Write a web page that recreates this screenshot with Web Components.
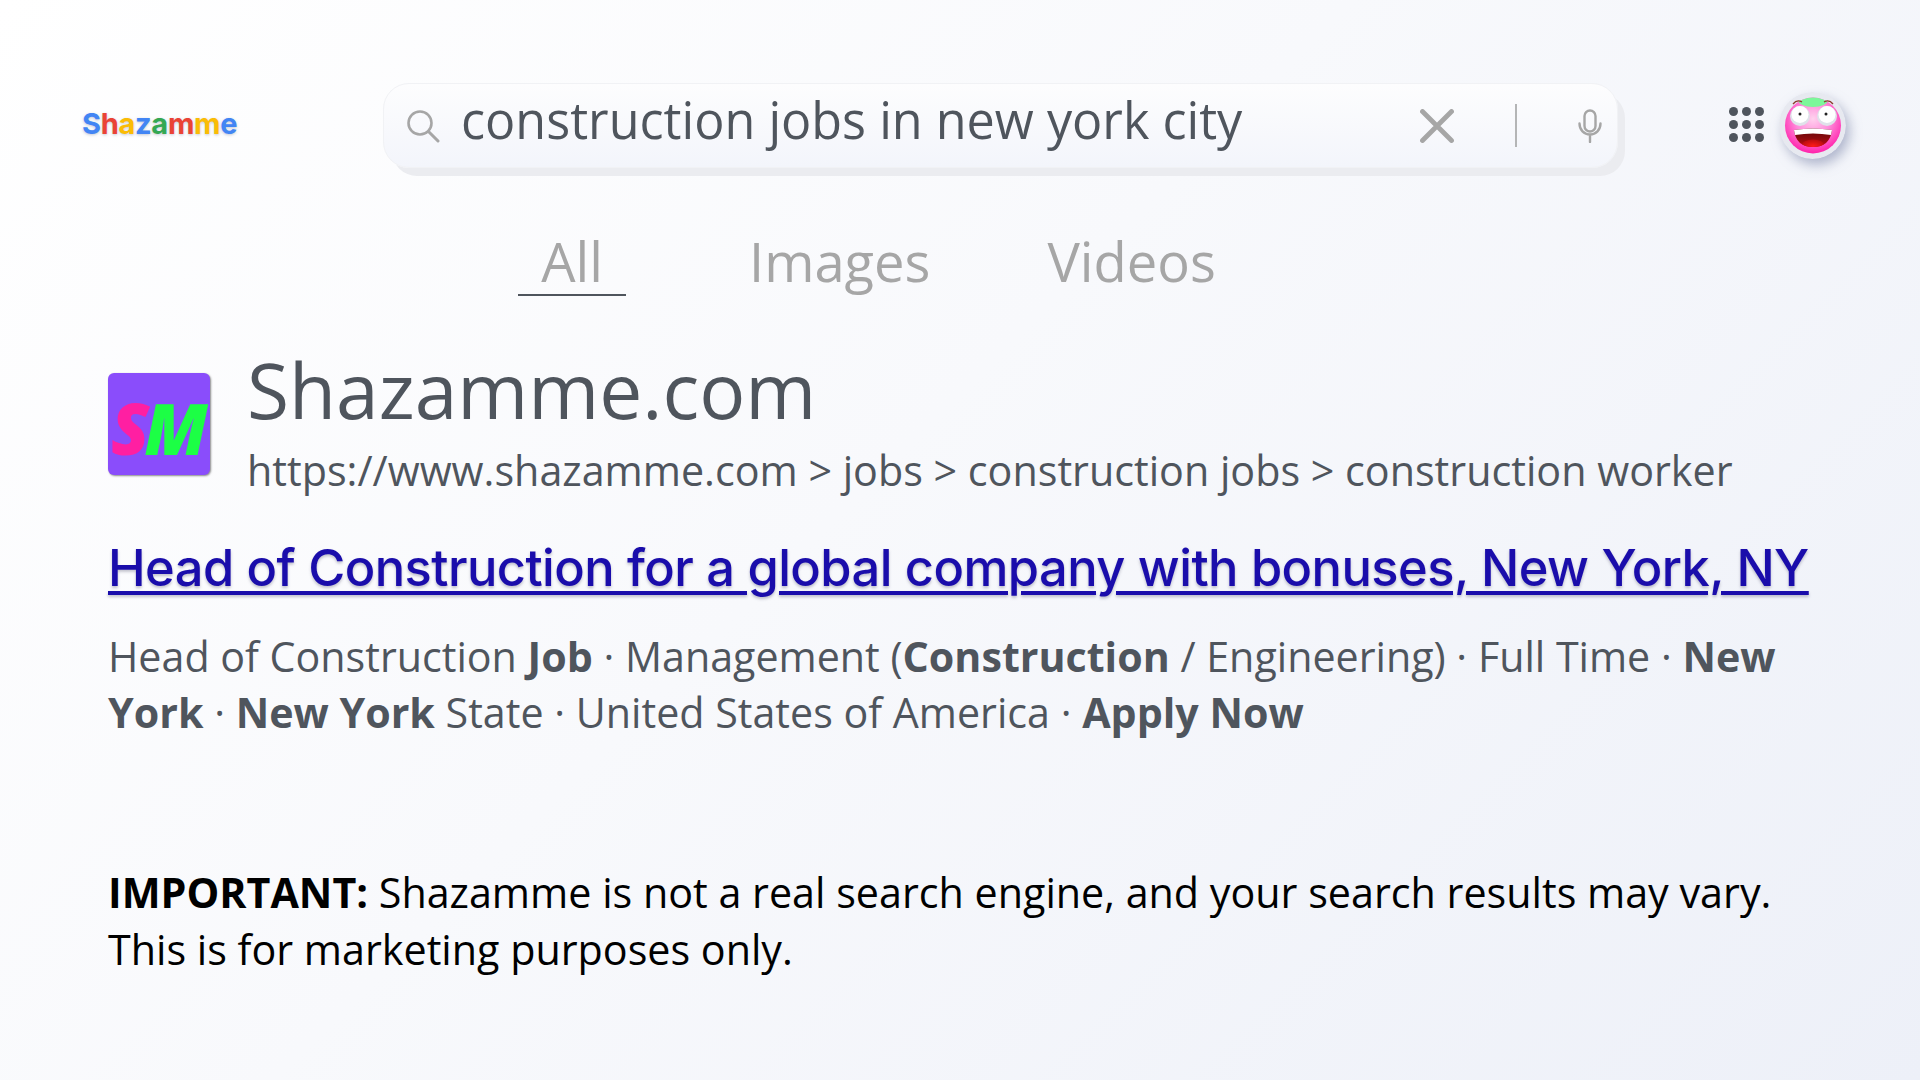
<!DOCTYPE html>
<html>
<head>
<meta charset="utf-8">
<title>Shazamme</title>
<style>
html,body{margin:0;padding:0;}
body{width:1920px;height:1080px;overflow:hidden;background:linear-gradient(135deg,#ffffff 0%,#f8f9fc 45%,#edf0f8 100%);font-family:"Open Sans",sans-serif;}
</style>
</head>
<body>
<serp-page>
  <serp-header query="construction jobs in new york city"></serp-header>
  <serp-tabs></serp-tabs>
  <serp-result>
    <span slot="site">Shazamme.com</span>
    <span slot="url">https://www.shazamme.com &gt; jobs &gt; construction jobs &gt; construction worker</span>
    <span slot="title">Head of Construction for a global company with bonuses, New York, NY</span>
    <span slot="desc">Head of Construction <b>Job</b> · Management (<b>Construction</b> / Engineering) · Full Time · <b>New York</b> · <b>New York</b> State · United States of America · <b>Apply Now</b></span>
  </serp-result>
  <serp-note><b>IMPORTANT:</b> Shazamme is not a real search engine, and your search results may vary. This is for marketing purposes only.</serp-note>
</serp-page>
<script>
class SerpPage extends HTMLElement{
    constructor(){
        super();
        this.attachShadow({mode:'open'});
        this.shadowRoot.innerHTML=`
        <style>
        :host{display:flex;flex-direction:column;width:1920px;height:1080px;box-sizing:border-box;}
        </style>
        <slot></slot>`;
    }
}
class SerpHeader extends HTMLElement{
    constructor(){
        super();
        this.attachShadow({mode:'open'});
    }
    connectedCallback(){
        const letters=[['S','#4285f4'],['h','#ea4335'],['a','#fbbc05'],['z','#4285f4'],['a','#34a853'],['m','#ea4335'],['m','#fbbc05'],['e','#4285f4']];
        const logo=letters.map(l=>`<span style="color:${l[1]}">${l[0]}</span>`).join('');
        this.shadowRoot.innerHTML=`
        <style>
        :host{display:flex;align-items:flex-start;padding:83px 0 0 82px;height:177px;box-sizing:border-box;flex:none;}
        .logo{width:301px;flex:none;height:81px;display:flex;align-items:center;font:700 29px/1 Inter,sans-serif;letter-spacing:-.3px;text-shadow:0 1px 3px rgba(90,100,130,.35);}
        .box{width:1235px;height:85px;flex:none;box-sizing:border-box;border-radius:26px;background:linear-gradient(180deg,#fdfdfe,#f3f5fb);border:1px solid #f1f2f5;box-shadow:8px 9px 0 -1px #ebecf0;display:flex;align-items:center;padding:0 0 0 22px;}
        .q{flex:1;font:400 50.3px/1 "Open Sans",sans-serif;color:#4f555d;margin-left:21px;position:relative;top:-5px;white-space:nowrap;}
        .sep{width:2px;height:43px;background:#b4b5b6;margin:0 61px 0 61px;}
        .apps{margin:24px 0 0 111px;width:35px;height:36px;display:grid;grid-template-columns:repeat(3,9.4px);grid-auto-rows:9.4px;gap:3.400px;flex:none;}
        .apps i{background:#4f555d;border-radius:50%;}
        .face{margin:9px 0 0 15px;width:67px;height:67px;flex:none;border-radius:50%;filter:drop-shadow(4px 6px 6px rgba(110,120,160,.5));}
        svg{display:block;flex:none;}
        </style>
        <div class="logo">${logo}</div>
        <div class="box">
          <svg width="34" height="34" viewBox="0 0 34 34" fill="none" stroke="#a6a6a6"><circle cx="14" cy="14" r="11.5" stroke-width="2.6"/><path d="M22.5 22.5L32 32" stroke-width="3" stroke-linecap="round"/></svg>
          <span class="q">${this.getAttribute('query')}</span>
          <svg width="34" height="34" viewBox="0 0 34 34" fill="none" stroke="#a6a6a6" stroke-width="4.800" stroke-linecap="round"><path d="M2.5 2.5L31.500 31.500M31.500 2.500L2.500 31.500"/></svg>
          <div class="sep"></div>
          <svg width="24" height="34" viewBox="0 0 24 34" fill="none" stroke="#a6a6a6" stroke-width="2.4" stroke-linecap="round" style="margin-right:15px"><rect x="6.500" y="1.500" width="11" height="21" rx="5.500"/><path d="M1.500 14.500c0 6.500 4.500 11 10.500 11s10.500-4.500 10.500-11M12 25.500v7.500"/></svg>
        </div>
        <div class="apps"><i></i><i></i><i></i><i></i><i></i><i></i><i></i><i></i><i></i></div>
        <svg class="face" viewBox="0 0 67 67">
          <defs>
            <radialGradient id="skin" cx=".5" cy=".38" r=".62"><stop offset="0" stop-color="#ffd2ee"/><stop offset=".5" stop-color="#ff8cdb"/><stop offset="1" stop-color="#ff22ab"/></radialGradient>
            <linearGradient id="mouth" x1="0" y1="0" x2="0" y2="1"><stop offset="0" stop-color="#5a0508"/><stop offset=".55" stop-color="#8f0a0e"/><stop offset="1" stop-color="#c60c10"/></linearGradient>
            <radialGradient id="tongue" cx=".5" cy=".6" r=".6"><stop offset="0" stop-color="#ff1a1a"/><stop offset="1" stop-color="#b80c10"/></radialGradient>
            <clipPath id="in"><circle cx="34" cy="33.500" r="28"/></clipPath>
            <clipPath id="mo"><path d="M15 38q19-3 38 0q-2 17-19 17T15 38z"/></clipPath>
          </defs>
          <circle cx="33.500" cy="33.500" r="33.500" fill="#e7e9f0"/>
          <circle cx="34" cy="33.500" r="28" fill="url(#skin)"/>
          <ellipse cx="34" cy="8" rx="15" ry="7" fill="#7cf79a" clip-path="url(#in)"/>
          <path d="M14 12q4-5 9-2M54 12q-4-5-9-2" fill="none" stroke="#8a3a2a" stroke-width="1.300"/>
          <circle cx="21" cy="24" r="10" fill="#dfe2ea"/><circle cx="21" cy="22.500" r="8.500" fill="#fff"/>
          <circle cx="48" cy="24" r="10" fill="#dfe2ea"/><circle cx="48" cy="22.500" r="8.500" fill="#fff"/>
          <circle cx="21" cy="22" r="1.500" fill="#222"/><circle cx="47" cy="22" r="1.500" fill="#222"/>
          <path d="M15 38q19-3 38 0q-2 17-19 17T15 38z" fill="url(#mouth)"/>
          <ellipse cx="34" cy="53" rx="11" ry="5.500" fill="url(#tongue)" clip-path="url(#mo)"/>
          <path d="M15 38q19-3 38 0l-1 5q-18-3-36 0z" fill="#fff"/>
        </svg>`;
    }
}
class SerpTabs extends HTMLElement{
    constructor(){
        super();
        this.attachShadow({mode:'open'});
        this.shadowRoot.innerHTML=`
        <style>
        :host{display:flex;flex:none;margin:50px 0 0 518px;font:400 54.3px/1 "Open Sans",sans-serif;color:#a6a6a6;height:69px;}
        .t{height:69px;box-sizing:border-box;white-space:nowrap;padding-top:7px;}
        .on{width:108px;text-align:center;border-bottom:2px solid #4f555d;}
        .i{margin-left:123px;}
        .v{margin-left:117px;}
        </style>
        <div class="t on">All</div><div class="t i">Images</div><div class="t v">Videos</div>`;
    }
}
class SerpResult extends HTMLElement{
    constructor(){
        super();
        this.attachShadow({mode:'open'});
        this.shadowRoot.innerHTML=`
        <style>
        :host{display:block;flex:none;margin:43px 90px 0 108px;color:#4f555d;font-family:"Open Sans",sans-serif;}
        .top{display:flex;}
        .icon{width:102px;height:102px;margin-top:34px;flex:none;border-radius:6px;background:#8a4dfb;box-shadow:1px 1px 2px rgba(60,60,60,.6);display:flex;align-items:center;justify-content:center;font:italic 800 70px/1 "Open Sans",sans-serif;letter-spacing:-5px;padding-right:4px;padding-top:8px;box-sizing:border-box;}
        .s{color:#ff1fa2;}
        .m{color:#1cff45;}
        .meta{margin-left:37px;}
        .site{font-size:76.7px;line-height:100px;white-space:nowrap;}
        .url{font-size:41.25px;line-height:58px;white-space:nowrap;margin-top:2px;}
        .title{display:block;margin-top:35px;font:500 50.6px/68px Inter,sans-serif;letter-spacing:-.56px;color:#1a0dab;text-decoration:underline;text-decoration-thickness:4px;text-underline-offset:5px;text-shadow:0 2px 3px rgba(80,80,110,.35);white-space:nowrap;}
        .desc{margin-top:26px;font-size:41.2px;line-height:56px;}
        </style>
        <div class="top">
          <div class="icon"><span class="s">S</span><span class="m">M</span></div>
          <div class="meta">
            <div class="site"><slot name="site"></slot></div>
            <div class="url"><slot name="url"></slot></div>
          </div>
        </div>
        <a class="title"><slot name="title"></slot></a>
        <div class="desc"><slot name="desc"></slot></div>`;
    }
}
class SerpNote extends HTMLElement{
    constructor(){
        super();
        this.attachShadow({mode:'open'});
        this.shadowRoot.innerHTML=`
        <style>
        :host{display:block;flex:none;margin:124px 90px 0 108px;font:400 41.25px/57px "Open Sans",sans-serif;color:#000;}
        </style>
        <slot></slot>`;
    }
}
customElements.define('serp-page',SerpPage);
customElements.define('serp-header',SerpHeader);
customElements.define('serp-tabs',SerpTabs);
customElements.define('serp-result',SerpResult);
customElements.define('serp-note',SerpNote);
</script>
</body>
</html>
